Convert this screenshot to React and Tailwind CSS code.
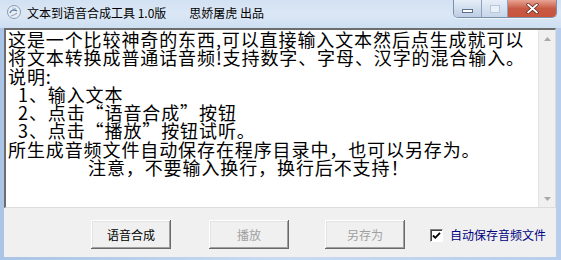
import React from 'react';

const CJK = { fontFamily: '"Noto Sans CJK SC", "Noto Sans", sans-serif' };

const LINES = [
  { text: '这是一个比较神奇的东西,可以直接输入文本然后点生成就可以', pad: 'pl-0' },
  { text: '将文本转换成普通话音频!支持数字、字母、汉字的混合输入。', pad: 'pl-0' },
  { text: '说明:', pad: 'pl-0' },
  { text: '1、输入文本', pad: 'pl-[10px]' },
  { text: '2、点击“语音合成”按钮', pad: 'pl-[10px]' },
  { text: '3、点击“播放”按钮试听。', pad: 'pl-[10px]' },
  { text: '所生成音频文件自动保存在程序目录中，也可以另存为。', pad: 'pl-0' },
  { text: '注意，不要输入换行，换行后不支持！', pad: 'pl-[80px]' },
];

function AppIcon() {
  return (
    <svg width="16" height="16" viewBox="0 0 16 16">
      <circle cx="8" cy="8" r="6.5" fill="#e8eef5" stroke="#8a9bb0" strokeWidth="1" />
      <path d="M4 9c1-3 4-4 7-2" stroke="#5b7fa8" strokeWidth="1.4" fill="none" />
      <path d="M5 12c2-1 4-1 6-3" stroke="#9aa9bb" strokeWidth="1.2" fill="none" />
      <path d="M6 4c1 0 3 0 4 1" stroke="#b5c2d1" strokeWidth="1.2" fill="none" />
    </svg>
  );
}

function WinButtons() {
  return (
    <div className="flex h-[18px] rounded-b-[5px] overflow-hidden border border-t-0 border-[#7b8fa9] shadow-[0_1px_0_#ffffff80]">
      <div className="w-[28px] flex items-center justify-center bg-gradient-to-b from-[#e6eef8] to-[#bccde3] border-r border-[#8da2bd]">
        <div className="w-[11px] h-[4px] bg-white border border-[#5d6f88] mt-[4px]" />
      </div>
      <div className="w-[26px] flex items-center justify-center bg-gradient-to-b from-[#e6eef8] to-[#c7d6ea] border-r border-[#8da2bd]">
        <div className="w-[10px] h-[8px] border border-[#b7c6d9] bg-[#e9f0f8]" />
      </div>
      <div className="w-[48px] flex items-center justify-center bg-gradient-to-b from-[#e8a493] via-[#c75a45] to-[#c9533b]">
        <svg width="13" height="11" viewBox="0 0 13 11">
          <path d="M2 1.5l9 8M11 1.5l-9 8" stroke="#5a2018" strokeWidth="3.2" strokeLinecap="round" />
          <path d="M2 1.5l9 8M11 1.5l-9 8" stroke="#ffffff" strokeWidth="1.8" strokeLinecap="round" />
        </svg>
      </div>
    </div>
  );
}

function Scrollbar() {
  return (
    <div className="w-[17px] flex flex-col justify-between bg-[#f0f0f0] border-l border-[#e4e4e4]">
      <div className="h-[17px] flex items-center justify-center">
        <svg width="7" height="4" viewBox="0 0 7 4"><path d="M0 4L3.5 0L7 4z" fill="#a8a8a8" /></svg>
      </div>
      <div className="h-[17px] flex items-center justify-center">
        <svg width="7" height="4" viewBox="0 0 7 4"><path d="M0 0L3.5 4L7 0z" fill="#a8a8a8" /></svg>
      </div>
    </div>
  );
}

function Btn({ label, disabled }) {
  return (
    <div className={`w-[80px] h-[29px] flex items-center justify-center text-[12px] bg-[#f0f0f0] shadow-[inset_-1px_-1px_0_#696969,inset_1px_1px_0_#ffffff,inset_-2px_-2px_0_#a0a0a0,inset_2px_2px_0_#e3e3e3] ${disabled ? 'text-[#a0a0a0]' : 'text-black'}`}>
      {label}
    </div>
  );
}

export default function App() {
  return (
    <div className="w-[561px] h-[260px] flex flex-col bg-gradient-to-r from-[#a9c4e6] via-[#c9dbf1] to-[#b7cdeb] overflow-hidden" style={CJK}>
      {/* Title bar */}
      <div className="h-[28px] flex items-start bg-gradient-to-b from-[#d2e1f3] via-[#dbe7f5] to-[#cddff2] pl-[6px] pr-[4px]">
        <div className="mt-[4px]"><AppIcon /></div>
        <div className="ml-[5px] mt-[5px] text-[12px] leading-[16px] text-black whitespace-pre flex">
          <span>文本到语音合成工具 1.0版</span>
          <span className="ml-[23px]">思娇屠虎 出品</span>
        </div>
        <div className="ml-auto">
          <WinButtons />
        </div>
      </div>

      {/* Client area */}
      <div className="flex-1 ml-[4px] mr-[5px] mb-[3px] flex flex-col bg-[#f0f0f0]">
        <div className="h-[180px] flex border-t-2 border-l-2 border-b border-r border-t-[#6d6d6d] border-l-[#6d6d6d] border-b-[#dcdcdc] border-r-[#dcdcdc] bg-white">
          <div className="flex-1 pl-[2px] pt-[0px] text-[18px] tracking-[0.9px] leading-[18.3px] text-black">
            {LINES.map((l, i) => (
              <div key={i} className={`whitespace-pre ${l.pad}`}>{l.text}</div>
            ))}
          </div>
          <Scrollbar />
        </div>

        <div className="flex-1 flex items-start pt-[12px] pl-[87px]">
          <Btn label="语音合成" />
          <div className="ml-[38px]"><Btn label="播放" disabled /></div>
          <div className="ml-[36px]"><Btn label="另存为" disabled /></div>
          <div className="ml-[25px] mt-[8px] flex items-center">
            <div className="w-[13px] h-[13px] bg-white border border-t-[#808080] border-l-[#808080] border-b-[#ffffff] border-r-[#ffffff] shadow-[inset_1px_1px_0_#404040] flex items-center justify-center">
              <svg width="9" height="9" viewBox="0 0 9 9"><path d="M1 4.5l2.3 2.3L8 1.8" stroke="#000" strokeWidth="1.8" fill="none" /></svg>
            </div>
            <span className="ml-[7px] text-[12px] text-[#000080] leading-[14px]">自动保存音频文件</span>
          </div>
        </div>
      </div>
    </div>
  );
}
